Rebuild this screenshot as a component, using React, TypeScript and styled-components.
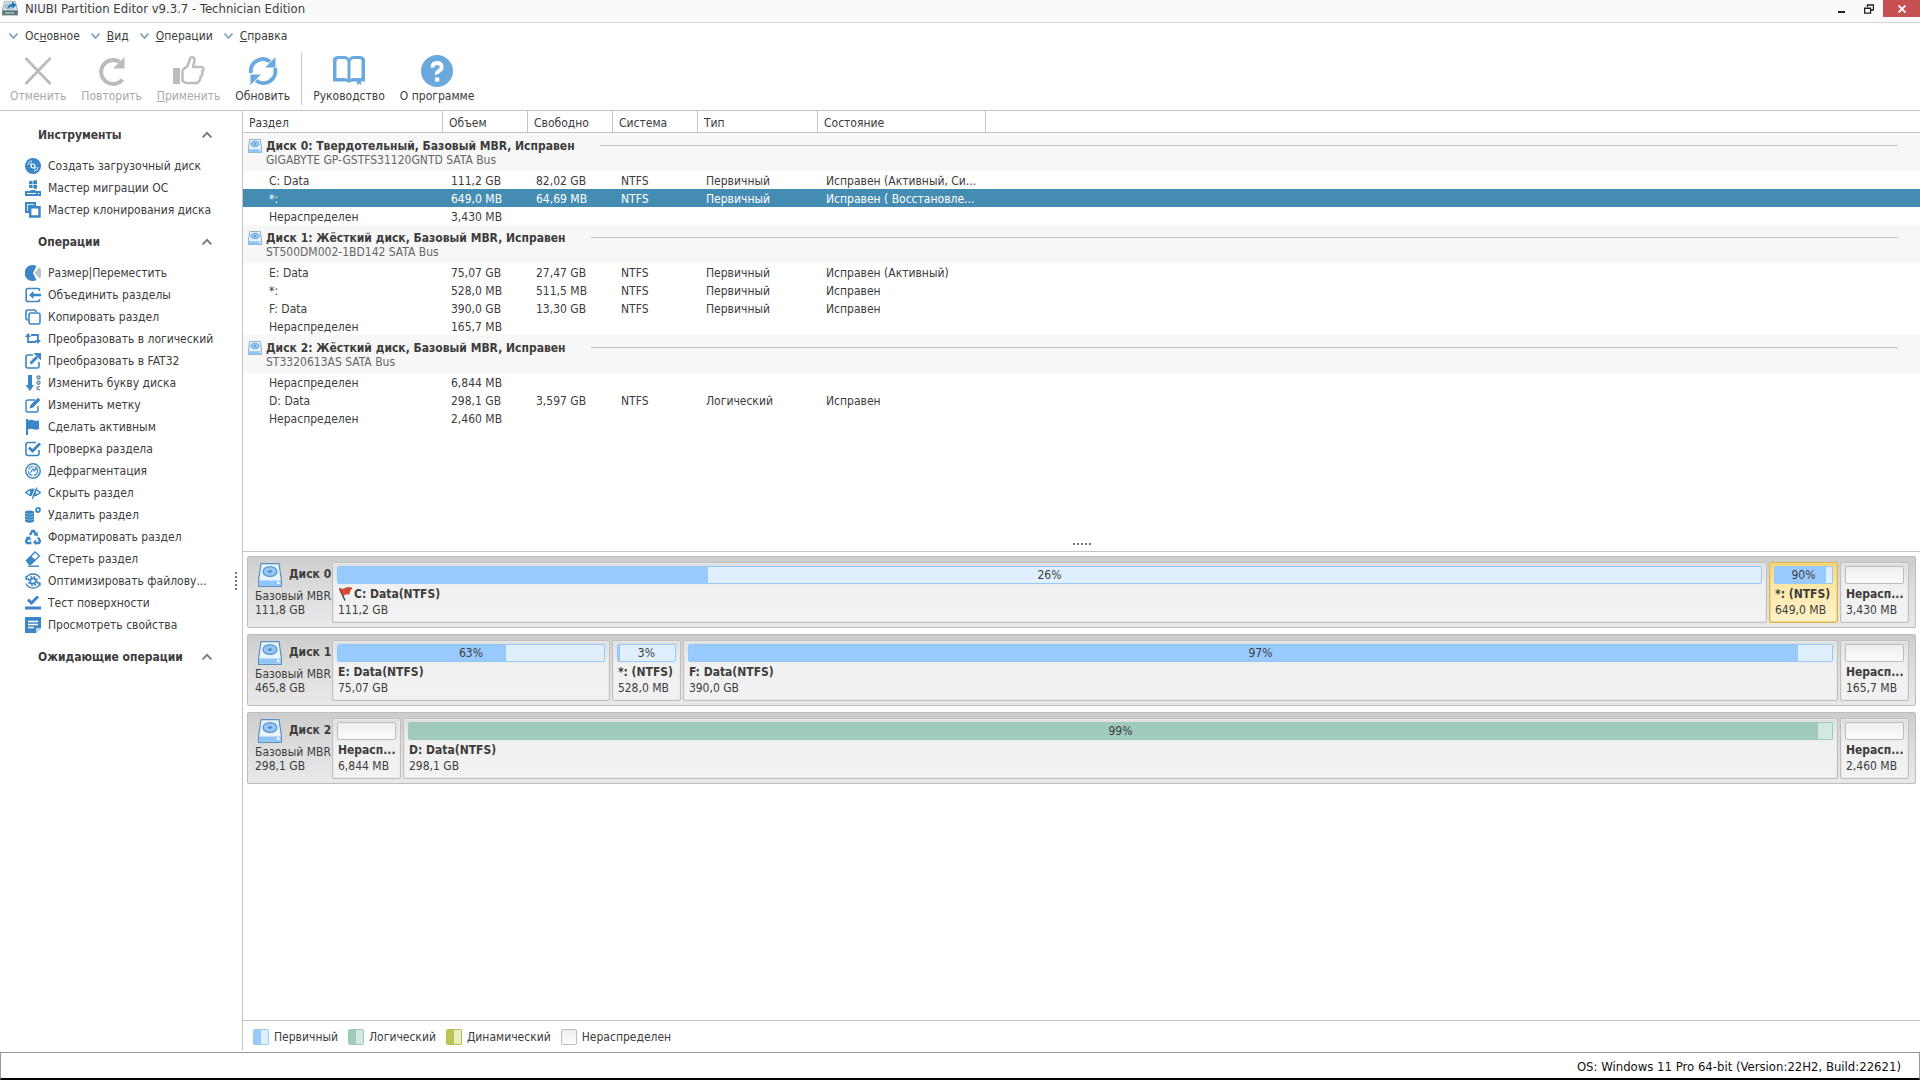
import React from "react";
import styled, { createGlobalStyle, css } from "styled-components";

const ink = "#3c3c3c";
const line = "#c4c4c4";
const blue = "#3b86c6";
const sky = "#6ba8dd";

const GlobalStyle = createGlobalStyle`
  * { box-sizing: border-box; }
  body {
    margin: 0;
    background: #fff;
    color: ${ink};
    font: 12px/18px "DejaVu Sans Condensed", "DejaVu Sans", sans-serif;
  }
  button { font: inherit; color: inherit; background: none; border: 0; padding: 0; margin: 0; }
  svg { display: block; flex: none; }
  ul { list-style: none; margin: 0; padding: 0; }
`;

const Window = styled.div`
  display: flex;
  flex-direction: column;
  min-height: 100vh;
`;

/* ---------- title bar ---------- */

const TitleBar = styled.header`
  display: flex;
  align-items: flex-start;
  height: 23px;
  padding-left: 2px;
  background: #fafafa;
  border-bottom: 1px solid #d3d6d8;
`;

const Title = styled.h1`
  flex: 1;
  margin: 0 0 0 7px;
  font-size: 13px;
  line-height: 18px;
  font-weight: 400;
`;

const WindowButton = styled.button<{ $close?: boolean }>`
  display: flex;
  align-items: center;
  justify-content: center;
  width: ${(p) => (p.$close ? 37 : 28)}px;
  height: 17px;
  background: ${(p) => (p.$close ? "#c75152" : "transparent")};
`;

/* ---------- menu and toolbar ---------- */

const MenuBar = styled.nav`
  display: flex;
  gap: 11px;
  padding: 4px 9px 3px;
`;

const MenuButton = styled.button`
  display: flex;
  align-items: center;
  gap: 7px;
  height: 18px;
`;

const Toolbar = styled.div`
  display: flex;
  gap: 15px;
  padding: 7px 10px 5px;
  border-bottom: 1px solid ${line};
`;

const ToolButton = styled.button`
  display: flex;
  flex-direction: column;
  align-items: center;
  gap: 0;
  &:disabled { color: #a9a9a9; }
`;

const ToolDivider = styled.span`
  width: 1px;
  margin: -2px -4px 0;
  background: ${line};
`;

/* ---------- body ---------- */

const Body = styled.div`
  flex: 1;
  display: flex;
  min-height: 0;
  padding-bottom: 2px;
`;

const Sidebar = styled.aside`
  flex: none;
  display: flex;
  width: 243px;
  border-right: 1px solid ${line};
`;

const SideContent = styled.div`
  flex: 1;
  padding: 12px 0 0 25px;
`;

const SideSection = styled.section`
  margin-bottom: 9px;
`;

const SideHeader = styled.button`
  display: flex;
  align-items: center;
  justify-content: space-between;
  width: 187px;
  height: 24px;
  margin-bottom: 8px;
  padding-left: 13px;
  font-weight: 700;
`;

const SideButton = styled.button`
  display: flex;
  align-items: center;
  gap: 7px;
  height: 22px;
  white-space: nowrap;
`;

const SideGrip = styled.div`
  flex: none;
  display: flex;
  flex-direction: column;
  justify-content: center;
  gap: 2px;
  width: 7px;
`;

const Dot = styled.i`
  width: 2px;
  height: 2px;
  background: #777;
`;

const Main = styled.main`
  flex: 1;
  min-width: 0;
  display: flex;
  flex-direction: column;
`;

const TablePane = styled.div`
  flex: 442 1 0;
  display: flex;
  flex-direction: column;
`;

const RowGrip = styled.div`
  display: flex;
  justify-content: center;
  gap: 2px;
  margin-top: auto;
  padding-bottom: 6px;
`;

/* ---------- partition table ---------- */

const Table = styled.table`
  width: 100%;
  table-layout: fixed;
  border-collapse: separate;
  border-spacing: 0;
`;

const Col = styled.col<{ $w?: number }>`
  width: ${(p) => (p.$w ? `${p.$w}px` : "auto")};
`;

const Th = styled.th`
  height: 22px;
  padding: 2px 0 0 6px;
  text-align: left;
  font-weight: 400;
  border-bottom: 1px solid ${line};
  border-right: 1px solid ${line};
  &:last-child { border-right: 0; }
`;

const GroupCell = styled.td`
  height: 38px;
  padding: 0 22px 0 5px;
  background: #f7f7f7;
`;

const Group = styled.div`
  display: grid;
  grid-template-columns: 14px auto 1fr;
  column-gap: 4px;
  line-height: 14px;
  padding-top: 2px;
`;

const GroupTitle = styled.strong`
  padding-right: 21px;
`;

const GroupRule = styled.span`
  height: 1px;
  margin-top: 6px;
  background: ${line};
`;

const GroupSub = styled.span`
  grid-column: 2 / 4;
  color: #666;
`;

const GroupIcon = styled.span`
  grid-row: 1 / 3;
`;

const Row = styled.tr<{ $selected?: boolean }>`
  line-height: 16px;
  ${(p) =>
    p.$selected &&
    css`
      background: #458cb3;
      color: #fff;
    `}
`;

const Td = styled.td`
  height: 18px;
  padding: 2px 0 0 8px;
  white-space: nowrap;
  &:first-child { padding-left: 26px; }
`;

/* ---------- disk map ---------- */

const DiskPane = styled.section`
  flex: 467 1 0;
  display: flex;
  flex-direction: column;
  gap: 6px;
  padding: 4px 4px 0;
  border-top: 1px solid ${line};
`;

const Disk = styled.article`
  display: flex;
  height: 72px;
  padding: 5px 6px 4px 7px;
  border: 1px solid #bdbdbd;
  border-radius: 2px;
  background: linear-gradient(#cdcdcd, #dcdcdc 45%, #e9e9e9);
`;

const DiskInfo = styled.div`
  flex: none;
  display: grid;
  grid-template-columns: 33px 1fr;
  grid-template-rows: 27px 14px 14px;
  width: 77px;
  line-height: 14px;
`;

const DiskIconBox = styled.span`
  padding: 1px 0 0 3px;
`;

const DiskName = styled.strong`
  line-height: 24px;
  padding-left: 1px;
  white-space: nowrap;
`;

const DiskLine = styled.span`
  grid-column: 1 / 3;
  white-space: nowrap;
`;

const Partitions = styled.div`
  flex: 1;
  min-width: 0;
  display: flex;
  gap: 2px;
`;

const Partition = styled.button<{ $size: number; $selected?: boolean }>`
  flex: ${(p) => p.$size} 1 69px;
  min-width: 0;
  display: block;
  padding: 3px 4px;
  text-align: left;
  line-height: 16px;
  white-space: nowrap;
  border: 1px solid #bfbfbf;
  border-radius: 2px;
  background: linear-gradient(#dedede, #f0f0f0 40%, #f2f2f2);
  box-shadow: inset 0 0 0 1px #e9e9e9;
  ${(p) =>
    p.$selected &&
    css`
      border-color: #d9b650;
      background: linear-gradient(#f3d27c, #fbe7a9 40%, #fff3c9);
      box-shadow: inset 0 0 0 1px #f6d67f;
    `}
`;

type Kind = "primary" | "logical" | "dynamic" | "free";
const palette: Record<Kind, { edge: string; fill: string; rest: string }> = {
  primary: { edge: "#96c9f5", fill: "#99cafd", rest: "#dfeffd" },
  logical: { edge: "#9dcbb8", fill: "#a0cabb", rest: "#d3e8e0" },
  dynamic: { edge: "#b6bf4c", fill: "#b9c653", rest: "#eaecc4" },
  free: { edge: "#bdbdbd", fill: "#f2f2f2", rest: "linear-gradient(#eeeeee, #fcfcfc)" },
};

const Bar = styled.span<{ $kind: Kind }>`
  display: grid;
  height: 18px;
  margin-bottom: 2px;
  border: 1px solid ${(p) => palette[p.$kind].edge};
  border-radius: 2px;
  background: ${(p) => palette[p.$kind].rest};
  > * { grid-area: 1 / 1; }
`;

const Fill = styled.span<{ $kind: Kind }>`
  background: ${(p) => palette[p.$kind].fill};
`;

const Percent = styled.span`
  text-align: center;
`;

const PartName = styled.strong`
  display: flex;
  align-items: center;
  padding-left: 1px;
`;

const PartSize = styled.span`
  display: block;
  padding-left: 1px;
`;

/* ---------- legend and status ---------- */

const Legend = styled.ul`
  display: flex;
  align-items: center;
  gap: 10px;
  height: 30px;
  padding: 2px 0 0 10px;
  border-top: 1px solid ${line};
`;

const LegendItem = styled.li`
  display: flex;
  align-items: center;
  gap: 5px;
`;

const Swatch = styled.span<{ $kind: Kind }>`
  display: flex;
  width: 16px;
  height: 16px;
  border: 1px solid ${(p) => palette[p.$kind].edge};
  border-radius: 2px;
  background: ${(p) => palette[p.$kind].rest};
  &::before {
    content: "";
    width: 50%;
    background: ${(p) => (p.$kind === "free" ? "transparent" : palette[p.$kind].fill)};
  }
`;

const StatusBar = styled.footer`
  height: 28px;
  padding: 1px 18px 0 0;
  font-size: 13px;
  line-height: 26px;
  text-align: right;
  color: #111;
  border: 1px solid #999;
  border-bottom: 2px solid #000;
`;

/* ---------- icons ---------- */

const AppIcon = () => (
  <svg width="16" height="16" viewBox="0 0 16 16">
    <path d="M2.500 1h11L16 10.500v5H0v-5z" fill="#8c9ba3" />
    <path d="M3 1.500h10l2 8.500H1z" fill="#d8e2e8" />
    <ellipse cx="7.500" cy="6.500" rx="5" ry="3.200" fill="#a7c3d2" />
    <path d="M5.500 8.500Q6 4.500 10 4V1.500L14.500 5 10.500 8.500V6.500Q8 6.500 5.500 8.500z" fill="#2479b5" />
    <path d="M.5 11h15v4H.5z" fill="#5f747d" />
    <path d="M3 12.200h9v1.600H3z" fill="#8fc7ac" />
  </svg>
);

const Chevron = ({ up }: { up?: boolean }) =>
  up ? (
    <svg width="10" height="8" viewBox="0 0 10 8">
      <path d="M.6 6.500L5 1.800l4.400 4.700" fill="none" stroke="#777" strokeWidth="1.800" />
    </svg>
  ) : (
    <svg width="9" height="8" viewBox="0 0 9 8">
      <path d="M.5 1.500L4.500 6l4-4.500" fill="none" stroke="#7ba3bd" strokeWidth="1.800" />
    </svg>
  );

const big = { width: 32, height: 32, viewBox: "0 0 32 32" };

const UndoX = () => (
  <svg {...big}><path d="M3.500 3L28.500 29M28.500 3L3.500 29" stroke="#bcbcbc" strokeWidth="2.800" fill="none" /></svg>
);
const Redo = () => (
  <svg {...big}>
    <path d="M26.500 24.500A12 12 0 1 1 23.500 6.800" fill="none" stroke="#bcbcbc" strokeWidth="4" />
    <path d="M28.500 2v11.500H17z" fill="#bcbcbc" />
  </svg>
);
const Thumb = () => (
  <svg {...big}>
    <path d="M0 13h7v16H0z" fill="#bcbcbc" />
    <path d="M9.500 15l5-4 3-8.500c2.500-1 4.500.5 4 3L20 12h9c2.500 1 2 3 0 4.500l.5 3-2 2.500-.5 3-2.500 3H13l-3.500-2z" fill="none" stroke="#bcbcbc" strokeWidth="2.400" strokeLinejoin="round" />
  </svg>
);
const Refresh = () => (
  <svg {...big}>
    <path d="M4 18A12 12 0 0 1 23 6.500" fill="none" stroke={sky} strokeWidth="4" />
    <path d="M28 13A12 12 0 0 1 9 25.500" fill="none" stroke={sky} strokeWidth="4" />
    <path d="M28.500 2v10.500H18z" fill={sky} />
    <path d="M3.500 30V19.500H14z" fill={sky} />
  </svg>
);
const Book = () => (
  <svg {...big}>
    <path d="M0 26.500V4Q1.500 1 5 1h6q4 0 5 3 1-3 5-3h6q3.500 0 5 3v22.500H20q-3 0-4 1.500-1-1.500-4-1.500z" fill={sky} />
    <path d="M3.500 6q0-2 2-2h5.500q3.500 0 3.500 3v17q-1.500-1-4-1h-7zM28.500 6q0-2-2-2H21q-3.500 0-3.500 3v17q1.500-1 4-1h7z" fill="#fff" />
    <path d="M24 25h4v5l-2-1.500-2 1.500z" fill={sky} />
  </svg>
);
const Help = () => (
  <svg {...big}>
    <circle cx="16" cy="16" r="16" fill={sky} />
    <path d="M11.500 12.500Q11.500 8 16 8t4.700 4q0 2.500-2.700 4t-2 3.500" fill="none" stroke="#fff" strokeWidth="3.800" />
    <path d="M14 22.500h4.300v4H14z" fill="#fff" />
  </svg>
);

const Icon16 = ({ children }: { children: React.ReactNode }) => (
  <svg width="16" height="16" viewBox="0 0 16 16" fill="none" stroke={blue} strokeWidth="1.600">
    {children}
  </svg>
);

const icons: Record<string, React.ReactNode> = {
  disc: (
    <>
      <circle cx="8" cy="8" r="8" fill={blue} stroke="none" />
      <circle cx="8" cy="8" r="2" stroke="#fff" strokeWidth="1.200" />
      <path d="M2.700 7A5.300 5.300 0 0 1 7 2.700M13.300 9A5.300 5.300 0 0 1 9 13.300M4.800 7A3.500 3.500 0 0 1 7 4.800M11.200 9A3.500 3.500 0 0 1 9 11.200" stroke="#fff" strokeWidth=".8" />
    </>
  ),
  migrate: (
    <>
      <path d="M4 1.300l3.500-.5v3.400H4zM8.200.700l3.800-.6v4.100H8.200zM4 4.900h3.500v3.400L4 7.800zM8.200 4.900H12V9l-3.800-.6zM0 11h5l1-1h4l1 1h5v5H0z" fill={blue} stroke="none" />
      <path d="M2 13.500h9M13 13.500h1.500" stroke="#fff" strokeWidth="1" />
    </>
  ),
  clone: (
    <>
      <path d="M0 0h11v4H4v7H0z" fill={blue} stroke="none" />
      <path d="M2 2.500h7M2.500 2v7" stroke="#fff" strokeWidth=".8" />
      <path d="M5.200 5.200h9.300v9.300H5.200z" fill="#fff" strokeWidth="2.400" />
    </>
  ),
  resize: (
    <>
      <path d="M8 8l3.500 7A8 8 0 1 1 11.500 1z" fill={blue} stroke="none" />
      <path d="M9.500 8l5-5.500a8 8 0 0 1 0 11z" fill="#b6c1cb" stroke="none" />
    </>
  ),
  merge: (
    <>
      <path d="M14.500 4V3Q14.500 1.500 13 1.500H3Q1.200 1.500 1.200 3v10q0 1.500 1.800 1.500h10q1.500 0 1.500-1.500v-1" />
      <path d="M4 8l4.500-4v2.800H16v2.400H8.500V12z" fill={blue} stroke="none" />
    </>
  ),
  copy: (
    <>
      <path d="M3 11Q1 11 1 9V3Q1 1 3 1h6q2 0 2 2" />
      <rect x="4" y="4" width="11" height="11" rx="2" />
    </>
  ),
  swap: (
    <>
      <path d="M3 5v6h8M13 11V4H6" strokeWidth="1.800" />
      <path d="M0 6l3-4 3 4zM10 9l3 4 3-4z" fill={blue} stroke="none" />
    </>
  ),
  exporting: (
    <>
      <path d="M8 2H3Q1 2 1 4v9q0 2 2 2h9q2 0 2-2V9" />
      <path d="M5.500 10.500L12 4" strokeWidth="2.800" />
      <path d="M8.500 0H16v7.500z" fill={blue} stroke="none" />
    </>
  ),
  letter: (
    <>
      <path d="M3 0h4v10h2l-4 6-4.500-6H3z" fill={blue} stroke="none" />
      <circle cx="13.500" cy="2.500" r="1.500" stroke="#6d89a2" strokeWidth="1.400" />
      <circle cx="13.500" cy="7.700" r="1.500" stroke="#6d89a2" strokeWidth="1.400" />
      <path d="M15 11.600h-1.500q-1.500 0-1.500 1.500t1.500 1.500H15" stroke="#6d89a2" strokeWidth="1.400" />
    </>
  ),
  edit: (
    <>
      <path d="M10 3H3Q1 3 1 5v8q0 2 2 2h8q2 0 2-2V9" strokeWidth="1.400" />
      <path d="M4.500 11.500l1-3.500L13 .8 15.500 3 8 10.500z" fill={blue} stroke="none" />
    </>
  ),
  flag: <path d="M1 0h2v1.500q3-1.500 5.500-.2t5.500 0V10q-3 1.200-5.500.2T3 10.500V16H1z" fill={blue} stroke="none" />,
  check: (
    <>
      <path d="M11 1.500H3Q1 1.500 1 3.500v9q0 2 2 2h9q2 0 2-2V9" />
      <path d="M4 6.500l3.500 3.500L15 2.500" strokeWidth="2.800" />
    </>
  ),
  defrag: (
    <>
      <circle cx="8" cy="8" r="7.200" strokeWidth="1.500" />
      <circle cx="8" cy="8" r="4.500" strokeWidth="1.200" strokeDasharray="6 1.500" />
      <path d="M5.500 9.500L8 6l2.500.5M8.500 8.500L11 6" strokeWidth="1.200" />
    </>
  ),
  hide: (
    <>
      <path d="M.5 7.500Q8 1 15.500 7.500 8 14 .5 7.500z" strokeWidth="1.500" />
      <circle cx="8" cy="7.500" r="3.200" fill={blue} stroke="none" />
      <path d="M6 13.500L11 2" stroke="#fff" strokeWidth="1" />
      <path d="M7.300 14L12 2.500" strokeWidth="1.200" />
    </>
  ),
  remove: (
    <>
      <path d="M0 4.500q4.500-2 9 0v10q-4.500 2.500-9 0z" fill={blue} stroke="none" />
      <path d="M0 6.500q4.500 2 9 0M0 9.300q4.500 2 9 0M0 12.100q4.500 2 9 0" stroke="#9cc3e2" strokeWidth=".7" />
      <circle cx="13" cy="3" r="2" strokeWidth="1.800" />
    </>
  ),
  recycle: (
    <>
      <path d="M5 6l2.300-4h1.600L11 5.500M13 8.500l2 3.500-1 2h-4M6.500 14H2l-1-2 2-3" strokeWidth="2.400" />
      <path d="M12.800 3v4.500L8.500 6zM11 10.500v5.500l-3-2.700zM.5 8l4.800-.5.5 4.500z" fill={blue} stroke="none" />
    </>
  ),
  erase: (
    <>
      <path d="M.5 9.500L10 0l5.500 5L6 14H4z" fill={blue} stroke="none" />
      <path d="M6.500 5.500L10 2l3.500 3L10 8.500z" fill="#fff" stroke="none" />
      <path d="M3 15.200h11" strokeWidth="1.400" />
    </>
  ),
  optimize: (
    <>
      <path d="M.8 5.500A8 8 0 0 1 15.200 5.500M15.200 10.500A8 8 0 0 1 .8 10.500M1 3v3h3M15 13v-3h-3" strokeWidth="1.300" />
      <circle cx="8" cy="8" r="4.300" strokeWidth="1.600" strokeDasharray="1.900 1.470" />
      <circle cx="8" cy="8" r="2.700" strokeWidth="1.700" />
    </>
  ),
  surface: (
    <>
      <path d="M3 4.500l3.500 3.500L13 1.500" strokeWidth="3" />
      <path d="M0 13h16" strokeWidth="3" />
    </>
  ),
  properties: (
    <>
      <path d="M0 0h16v11l-5 5H0z" fill={blue} stroke="none" />
      <path d="M3 4.500h10M3 7.500h10M3 10.500h6" stroke="#fff" strokeWidth="1.300" />
      <path d="M11 11h5l-5 5z" fill="#b9d6ee" stroke="none" />
    </>
  ),
};

const DriveIcon = ({ size }: { size: number }) => (
  <svg width={size} height={size} viewBox="0 0 24 24">
    <path d="M3 .700h18L23.400 17v6.300H.6V17z" fill="#e9f4fe" stroke="#5c8fbd" strokeWidth="1.200" />
    <path d="M1.200 17.500h21.600v5.200H1.200z" fill="#8fc4f8" />
    <ellipse cx="12" cy="8.500" rx="7" ry="4.800" fill="#93c6f7" stroke="#5b93c6" strokeWidth="1.200" />
    <ellipse cx="12" cy="8.500" rx="1.800" ry="1.200" fill="#4a82b5" />
    <rect x="19" y="18.500" width="2.500" height="2.500" fill="#fff" />
  </svg>
);

const RedFlag = () => (
  <svg width="16" height="16" viewBox="0 0 16 16">
    <path d="M1.500 2.500l5.500 12" stroke="#444" strokeWidth="1.400" />
    <path d="M1.500 2.500Q5 4 7 2.500T14 2q-3 3-3 6-3-1-6 1.500z" fill="#e2492f" stroke="#8d3022" strokeWidth=".6" />
  </svg>
);

/* ---------- data ---------- */

const menus: [string, string, string][] = [
  ["Ос", "н", "овное"],
  ["", "В", "ид"],
  ["", "О", "перации"],
  ["", "С", "правка"],
];

const tools: [string, string][] = [
  ["disc", "Создать загрузочный диск"],
  ["migrate", "Мастер миграции ОС"],
  ["clone", "Мастер клонирования диска"],
];

const operations: [string, string][] = [
  ["resize", "Размер|Переместить"],
  ["merge", "Объединить разделы"],
  ["copy", "Копировать раздел"],
  ["swap", "Преобразовать в логический"],
  ["exporting", "Преобразовать в FAT32"],
  ["letter", "Изменить букву диска"],
  ["edit", "Изменить метку"],
  ["flag", "Сделать активным"],
  ["check", "Проверка раздела"],
  ["defrag", "Дефрагментация"],
  ["hide", "Скрыть раздел"],
  ["remove", "Удалить раздел"],
  ["recycle", "Форматировать раздел"],
  ["erase", "Стереть раздел"],
  ["optimize", "Оптимизировать файлову..."],
  ["surface", "Тест поверхности"],
  ["properties", "Просмотреть свойства"],
];

const columns = ["Раздел", "Объем", "Свободно", "Система", "Тип", "Состояние"];
const widths = [200, 85, 85, 85, 120, 168];

const groups = [
  {
    title: "Диск 0: Твердотельный, Базовый MBR, Исправен",
    sub: "GIGABYTE GP-GSTFS31120GNTD SATA Bus",
    rows: [
      ["C: Data", "111,2 GB", "82,02 GB", "NTFS", "Первичный", "Исправен (Активный, Си..."],
      ["*:", "649,0 MB", "64,69 MB", "NTFS", "Первичный", "Исправен ( Восстановле..."],
      ["Нераспределен", "3,430 MB", "", "", "", ""],
    ],
    selected: 1,
  },
  {
    title: "Диск 1: Жёсткий диск, Базовый MBR, Исправен",
    sub: "ST500DM002-1BD142 SATA Bus",
    rows: [
      ["E: Data", "75,07 GB", "27,47 GB", "NTFS", "Первичный", "Исправен (Активный)"],
      ["*:", "528,0 MB", "511,5 MB", "NTFS", "Первичный", "Исправен"],
      ["F: Data", "390,0 GB", "13,30 GB", "NTFS", "Первичный", "Исправен"],
      ["Нераспределен", "165,7 MB", "", "", "", ""],
    ],
    selected: -1,
  },
  {
    title: "Диск 2: Жёсткий диск, Базовый MBR, Исправен",
    sub: "ST3320613AS SATA Bus",
    rows: [
      ["Нераспределен", "6,844 MB", "", "", "", ""],
      ["D: Data", "298,1 GB", "3,597 GB", "NTFS", "Логический", "Исправен"],
      ["Нераспределен", "2,460 MB", "", "", "", ""],
    ],
    selected: -1,
  },
];

type Part = { name: string; size: string; weight: number; kind: Kind; used?: number; flag?: boolean; selected?: boolean };

const free = (size: string): Part => ({ name: "Нерасп...", size, weight: 0, kind: "free" });

const disks: { name: string; size: string; parts: Part[] }[] = [
  {
    name: "Диск 0",
    size: "111,8 GB",
    parts: [
      { name: "C: Data(NTFS)", size: "111,2 GB", weight: 111, kind: "primary", used: 26, flag: true },
      { name: "*: (NTFS)", size: "649,0 MB", weight: 0, kind: "primary", used: 90, selected: true },
      free("3,430 MB"),
    ],
  },
  {
    name: "Диск 1",
    size: "465,8 GB",
    parts: [
      { name: "E: Data(NTFS)", size: "75,07 GB", weight: 75, kind: "primary", used: 63 },
      { name: "*: (NTFS)", size: "528,0 MB", weight: 0, kind: "primary", used: 3 },
      { name: "F: Data(NTFS)", size: "390,0 GB", weight: 390, kind: "primary", used: 97 },
      free("165,7 MB"),
    ],
  },
  {
    name: "Диск 2",
    size: "298,1 GB",
    parts: [
      free("6,844 MB"),
      { name: "D: Data(NTFS)", size: "298,1 GB", weight: 298, kind: "logical", used: 99 },
      free("2,460 MB"),
    ],
  },
];

const legend: [Kind, string][] = [
  ["primary", "Первичный"],
  ["logical", "Логический"],
  ["dynamic", "Динамический"],
  ["free", "Нераспределен"],
];

/* ---------- parts ---------- */

const Dots = () => (
  <>
    {[0, 1, 2, 3, 4].map((n) => (
      <Dot key={n} />
    ))}
  </>
);

const Section = ({ title, items }: { title: string; items: [string, string][] }) => (
  <SideSection>
    <SideHeader>
      {title}
      <Chevron up />
    </SideHeader>
    <ul>
      {items.map(([icon, label]) => (
        <li key={label}>
          <SideButton>
            <Icon16>{icons[icon]}</Icon16>
            {label}
          </SideButton>
        </li>
      ))}
    </ul>
  </SideSection>
);

const PartitionBox = ({ part }: { part: Part }) => (
  <Partition $size={part.weight} $selected={part.selected}>
    <Bar $kind={part.kind}>
      {part.used !== undefined && (
        <>
          <Fill $kind={part.kind} style={{ width: `${part.used}%` }} />
          <Percent>{part.used}%</Percent>
        </>
      )}
    </Bar>
    <PartName>
      {part.flag && <RedFlag />}
      {part.name}
    </PartName>
    <PartSize>{part.size}</PartSize>
  </Partition>
);

export default function App() {
  return (
    <Window>
      <GlobalStyle />
      <TitleBar>
        <AppIcon />
        <Title>NIUBI Partition Editor v9.3.7 - Technician Edition</Title>
        <WindowButton aria-label="Свернуть">
          <svg width="10" height="10"><path d="M2 8h7" stroke="#222" strokeWidth="2" /></svg>
        </WindowButton>
        <WindowButton aria-label="Восстановить">
          <svg width="10" height="10" viewBox="0 0 10 10" fill="none" stroke="#222">
            <path d="M3.500 3V.900H9.500V6H7M3 1h7" strokeWidth="1.300" />
            <path d="M.6 4.200h6v5h-6zM0 4.300h7" strokeWidth="1.300" />
          </svg>
        </WindowButton>
        <WindowButton $close aria-label="Закрыть">
          <svg width="8" height="8" viewBox="0 0 8 8"><path d="M.5.500l7 7M7.500.500l-7 7" stroke="#fff" strokeWidth="1.900" /></svg>
        </WindowButton>
      </TitleBar>
      <MenuBar>
        {menus.map(([a, key, b]) => (
          <MenuButton key={b}>
            <Chevron />
            <span>{a}<u>{key}</u>{b}</span>
          </MenuButton>
        ))}
      </MenuBar>
      <Toolbar>
        <ToolButton disabled><UndoX /><span>Отменить</span></ToolButton>
        <ToolButton disabled><Redo /><span>Повторить</span></ToolButton>
        <ToolButton disabled><Thumb /><span><u>П</u>рименить</span></ToolButton>
        <ToolButton><Refresh /><span>Обновить</span></ToolButton>
        <ToolDivider />
        <ToolButton><Book /><span>Руководство</span></ToolButton>
        <ToolButton><Help /><span>О программе</span></ToolButton>
      </Toolbar>
      <Body>
        <Sidebar>
          <SideContent>
            <Section title="Инструменты" items={tools} />
            <Section title="Операции" items={operations} />
            <Section title="Ожидающие операции" items={[]} />
          </SideContent>
          <SideGrip><Dots /></SideGrip>
        </Sidebar>
        <Main>
          <TablePane>
            <Table>
              <colgroup>
                {widths.map((w, n) => <Col key={n} $w={w} />)}
                <Col />
              </colgroup>
              <thead>
                <tr>
                  {columns.map((c) => <Th key={c}>{c}</Th>)}
                  <Th as="td" />
                </tr>
              </thead>
              {groups.map((g) => (
                <tbody key={g.title}>
                  <tr>
                    <GroupCell colSpan={7}>
                      <Group>
                        <GroupIcon><DriveIcon size={14} /></GroupIcon>
                        <GroupTitle>{g.title}</GroupTitle>
                        <GroupRule />
                        <GroupSub>{g.sub}</GroupSub>
                      </Group>
                    </GroupCell>
                  </tr>
                  {g.rows.map((cells, r) => (
                    <Row key={r} $selected={r === g.selected}>
                      {cells.map((c, n) => <Td key={n}>{c}</Td>)}
                      <Td />
                    </Row>
                  ))}
                </tbody>
              ))}
            </Table>
            <RowGrip><Dots /></RowGrip>
          </TablePane>
          <DiskPane>
            {disks.map((d) => (
              <Disk key={d.name}>
                <DiskInfo>
                  <DiskIconBox><DriveIcon size={24} /></DiskIconBox>
                  <DiskName>{d.name}</DiskName>
                  <DiskLine>Базовый MBR</DiskLine>
                  <DiskLine>{d.size}</DiskLine>
                </DiskInfo>
                <Partitions>
                  {d.parts.map((p) => <PartitionBox key={p.size} part={p} />)}
                </Partitions>
              </Disk>
            ))}
          </DiskPane>
          <Legend>
            {legend.map(([kind, label]) => (
              <LegendItem key={kind}><Swatch $kind={kind} />{label}</LegendItem>
            ))}
          </Legend>
        </Main>
      </Body>
      <StatusBar>OS: Windows 11 Pro 64-bit (Version:22H2, Build:22621)</StatusBar>
    </Window>
  );
}
